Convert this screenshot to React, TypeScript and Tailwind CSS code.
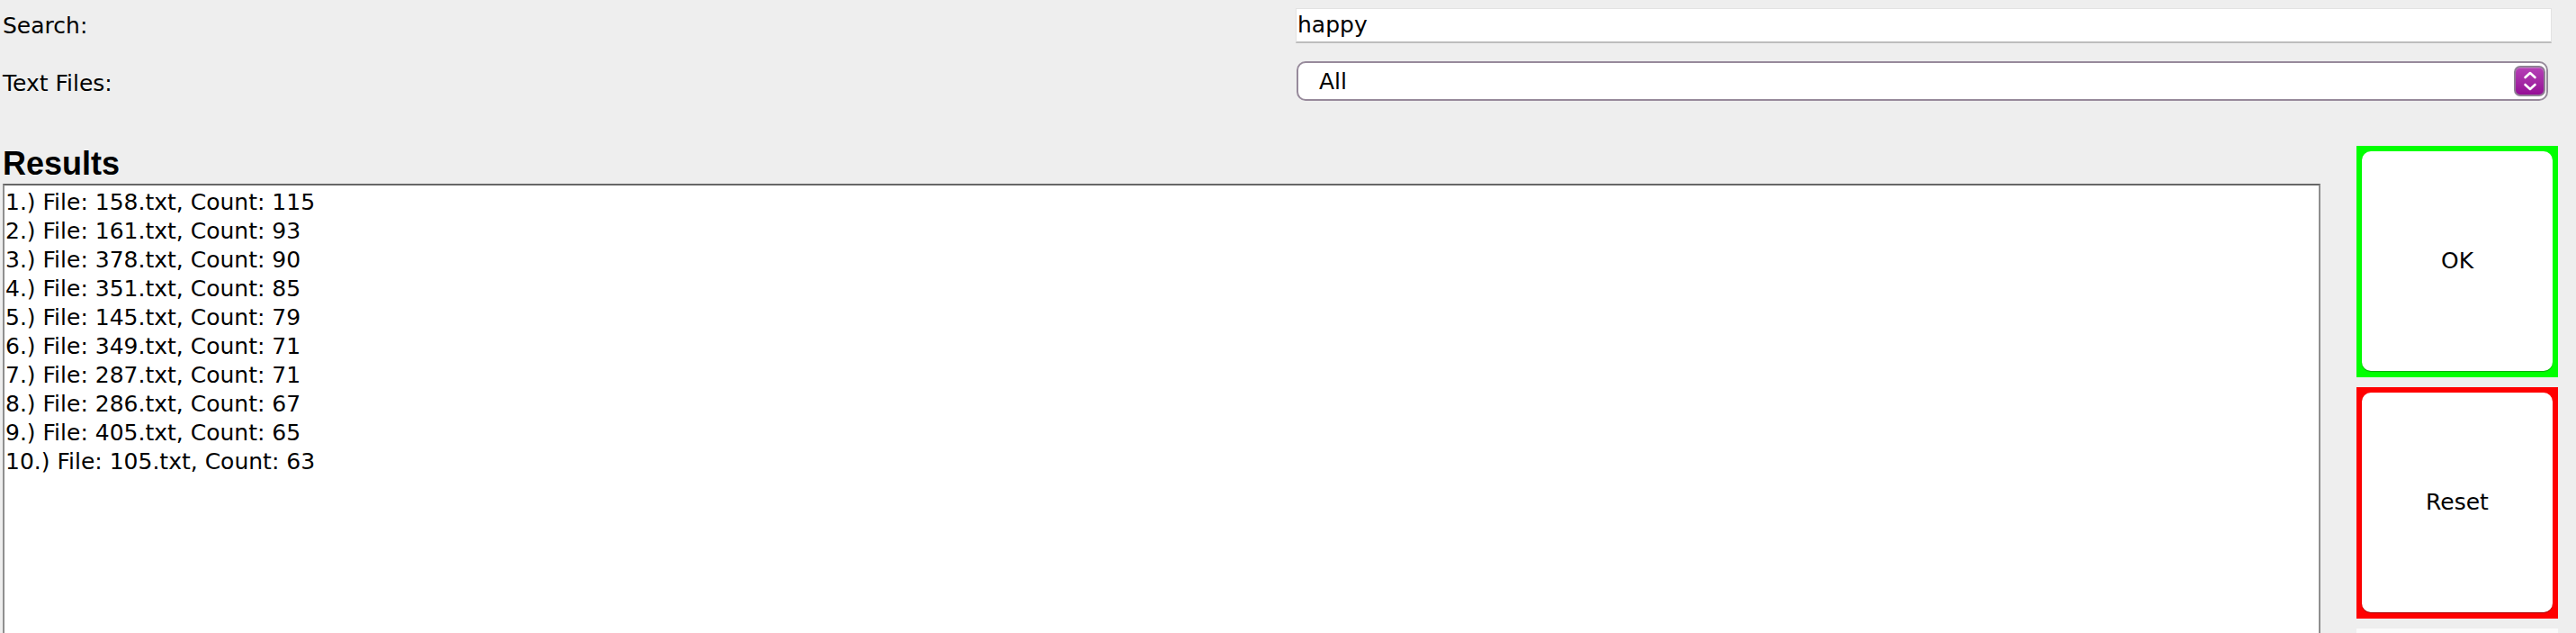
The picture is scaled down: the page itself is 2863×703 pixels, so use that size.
const results = [
  { file: "158.txt", count: 115 },
  { file: "161.txt", count: 93 },
  { file: "378.txt", count: 90 },
  { file: "351.txt", count: 85 },
  { file: "145.txt", count: 79 },
  { file: "349.txt", count: 71 },
  { file: "287.txt", count: 71 },
  { file: "286.txt", count: 67 },
  { file: "405.txt", count: 65 },
  { file: "105.txt", count: 63 },
]

const Stepper = () => (
  <div className="w-[35px] h-[34px] rounded-[7px] border-[2px] border-[#8f7f94] bg-gradient-to-b from-[#b53fb6] to-[#950c96] flex items-center justify-center shadow-[inset_0_1px_0_rgba(255,255,255,0.25)]">
    <svg width="18" height="26" viewBox="0 0 18 26" fill="none" stroke="white" strokeWidth="2.6" strokeLinecap="round" strokeLinejoin="round">
      <path d="M3.5 9 L9 4 L14.5 9" />
      <path d="M3.5 17 L9 22 L14.5 17" />
    </svg>
  </div>
)

const BigButton = ({ label, color }: { label: string; color: string }) => (
  <div className={`w-[224px] h-[257px] p-[6px] pb-[7px] ${color}`}>
    <div className="w-full h-full bg-white rounded-[10px] shadow-[0_1px_1px_rgba(0,0,0,0.35)] flex items-center justify-center text-[25px]">
      {label}
    </div>
  </div>
)

export default function App() {
  return (
    <div className="w-[2863px] h-[703px] overflow-hidden bg-[#eeeeee] text-black font-['DejaVu_Sans',sans-serif]">

      <div className="flex flex-col gap-[20px] pt-[9px] pl-[3px]">

        <div className="flex items-center h-[39px]">
          <div className="w-[1437px] text-[25px] leading-[32px]">Search:</div>
          <div className="w-[1396px] h-[39px] bg-white border border-[#e2e2e2] border-b-[2px] border-b-[#bdbdbd] flex items-center pl-[1px] text-[25px]">
            happy
          </div>
        </div>

        <div className="flex items-center h-[44px]">
          <div className="w-[1438px] text-[25px] leading-[32px] pt-[5px]">Text Files:</div>
          <div className="w-[1391px] h-[44px] bg-white border-[2px] border-[#978a9b] rounded-[10px] flex items-center justify-between pl-[23px] pr-[1px] text-[25px]">
            <span className="pt-[1px]">All</span>
            <Stepper />
          </div>
        </div>

      </div>

      <div className="flex mt-[50px] pl-[3px]">

        <div className="flex flex-col w-[2576px]">
          <h2 className="mt-[2px] h-[36px] leading-none text-[36px] font-bold font-['Liberation_Sans',sans-serif]">Results</h2>
          <div className="mt-[4px] h-[540px] bg-white border-[2px] border-[#8f8f8f] border-t-[#666666] pt-[3px] pl-[1px] text-[25px] leading-[32px]">
            {results.map((r, i) => (
              <div key={i}>{i + 1}.) File: {r.file}, Count: {r.count}</div>
            ))}
          </div>
        </div>

        <div className="ml-[40px] flex flex-col gap-[11px] w-[224px]">
          <BigButton label="OK" color="bg-[#00ff00]" />
          <BigButton label="Reset" color="bg-[#ff0000]" />
          <div className="w-[224px] h-[257px] p-[6px] bg-[#fafafa]">
            <div className="w-full h-full bg-white rounded-[10px]" />
          </div>
        </div>

      </div>

    </div>
  )
}
